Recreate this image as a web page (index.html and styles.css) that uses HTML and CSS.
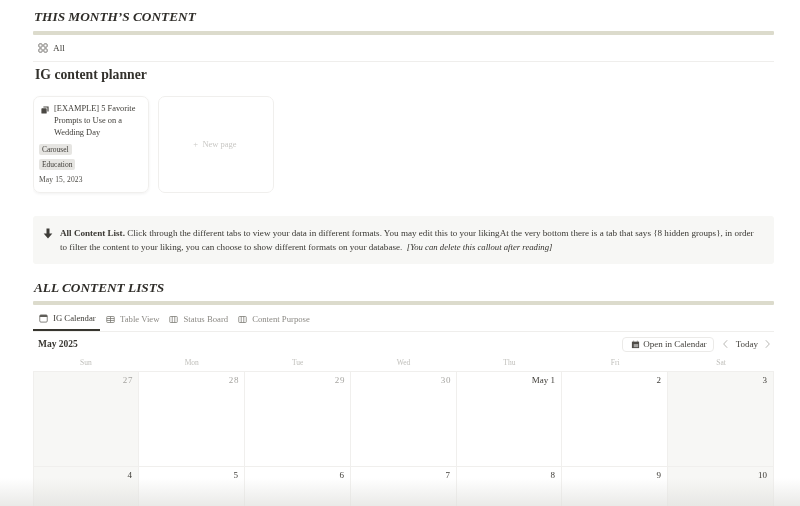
FILE: index.html
```html
<!DOCTYPE html>
<html lang="en">
<head>
<meta charset="utf-8">
<title>Content planner</title>
<link rel="stylesheet" href="styles.css">
</head>
<body>
<main class="page">
  <h2 class="section-title first">THIS MONTH’S CONTENT</h2>
  <div class="rule"></div>
  <nav class="tabs small-tabs">
    <span class="tab plain">
      <svg class="ico" viewBox="0 0 12 12"><rect x="1" y="1" width="4" height="4" rx="1"/><rect x="7" y="1" width="4" height="4" rx="1"/><rect x="1" y="7" width="4" height="4" rx="1"/><rect x="7" y="7" width="4" height="4" rx="1"/></svg>All
    </span>
  </nav>
  <h3 class="planner">IG content planner</h3>
  <div class="cards">
    <article class="card">
      <div class="card-head">
        <svg class="stack" viewBox="0 0 10 10"><path d="M3 0.500h6.500v6.500H8V2H3z"/><rect x="0.500" y="2.800" width="6.600" height="6.600" rx="0.800"/></svg>
        <span class="card-title">[EXAMPLE] 5 Favorite Prompts to Use on a Wedding Day</span>
      </div>
      <span class="tag">Carousel</span>
      <span class="tag">Education</span>
      <span class="date">May 15, 2023</span>
    </article>
    <article class="card new"><span>+&nbsp;&nbsp;New page</span></article>
  </div>
  <aside class="callout">
    <svg class="arrow" viewBox="0 0 12 13"><path d="M4.200 0.500h3.600v6h3.400L6 12.500 0.800 6.500h3.400z"/></svg>
    <p><b>All Content List.</b> Click through the different tabs to view your data in different formats. You may edit this to your likingAt the very bottom there is a tab that says {8 hidden groups}, in order to filter the content to your liking, you can choose to show different formats on your database.&nbsp; <i class="note">[You can delete this callout after reading]</i></p>
  </aside>
  <h2 class="section-title second">ALL CONTENT LISTS</h2>
  <div class="rule"></div>
  <nav class="tabs view-tabs">
    <span class="tab active">
      <svg class="ico" viewBox="0 0 12 12"><rect x="1" y="1.200" width="10" height="9.600" rx="1.500"/><path class="fill" d="M1 2.500a1.300 1.300 0 0 1 1.300-1.300h7.400A1.300 1.300 0 0 1 11 2.500V4H1z"/></svg>IG Calendar
    </span>
    <span class="tab">
      <svg class="ico" viewBox="0 0 12 12"><rect x="1" y="2" width="10" height="8" rx="1"/><path d="M1 4.700h10M1 7.300h10M6 2v8"/></svg>Table View
    </span>
    <span class="tab">
      <svg class="ico" viewBox="0 0 12 12"><rect x="1" y="2" width="10" height="8" rx="1"/><path d="M4.300 2v8M7.700 2v8"/></svg>Status Board
    </span>
    <span class="tab">
      <svg class="ico" viewBox="0 0 12 12"><rect x="1" y="2" width="10" height="8" rx="1"/><path d="M4.300 2v8M7.700 2v8"/></svg>Content Purpose
    </span>
  </nav>
  <div class="cal-bar">
    <strong>May 2025</strong>
    <div class="cal-actions">
      <span class="open-btn">
        <svg class="cal-ico" viewBox="0 0 10 10"><path d="M1 1.800h8V9H1z"/><path d="M2.500 0.800h1v1h-1zM6.500 0.800h1v1h-1z"/><path class="cut" d="M3 4.500h5v3.500H3z"/></svg>Open in Calendar
      </span>
      <svg class="chev" viewBox="0 0 8 12"><path d="M6 1.500 1.800 6 6 10.500"/></svg>
      <span class="today">Today</span>
      <svg class="chev" viewBox="0 0 8 12"><path d="M2 1.500 6.200 6 2 10.500"/></svg>
    </div>
  </div>
  <div class="weekdays">
    <span>Sun</span><span>Mon</span><span>Tue</span><span>Wed</span><span>Thu</span><span>Fri</span><span>Sat</span>
  </div>
  <div class="grid">
    <div class="cell off muted">27</div><div class="cell muted">28</div><div class="cell muted">29</div><div class="cell muted">30</div><div class="cell">May 1</div><div class="cell">2</div><div class="cell off">3</div>
    <div class="cell off">4</div><div class="cell">5</div><div class="cell">6</div><div class="cell">7</div><div class="cell">8</div><div class="cell">9</div><div class="cell off">10</div>
  </div>
</main>
<div class="fade"></div>
</body>
</html>
```
FILE: styles.css
```css
* { box-sizing: border-box; }
html, body { margin: 0; height: 100%; overflow: hidden; background: #fff; }
body { font-family: "Liberation Serif", serif; color: #37352f; }
.page { width: 741px; height: 506px; margin-left: 33px; overflow: hidden; filter: blur(0.35px); }
.section-title { margin: 0; font-size: 13.300px; line-height: 18px; font-style: italic; font-weight: 700; color: #2f2d29; padding-left: 1px; }
.first { padding-top: 8px; height: 31px; }
.second { margin-top: 14px; height: 23px; padding-top: 1px; }
.rule { height: 4px; background: #dcdbcc; border-radius: 1px; }
.tabs { display: flex; border-bottom: 1px solid #efeeec; font-size: 9.200px; }
.small-tabs { height: 27px; padding-left: 5px; align-items: center; }
.tab { display: flex; align-items: center; gap: 5px; color: #6b6963; }
.plain { color: #3f3d38; }
.ico { width: 10px; height: 10px; fill: none; stroke: #5f5d58; stroke-width: 1; }
.fill { fill: #5f5d58; stroke: none; }
.planner { margin: 4px 0 0 2px; height: 30px; font-size: 13.700px; line-height: 18px; color: #33312c; font-weight: 700; }
.cards { display: flex; gap: 9px; height: 97px; }
.card { width: 116px; height: 97px; border: 1px solid #f0efed; border-radius: 7px; box-shadow: 0 1px 3px rgba(15, 15, 15, .06); padding: 6px 5px 0; font-size: 8px; display: flex; flex-direction: column; align-items: flex-start; }
.card-head { display: flex; gap: 5px; padding-left: 2px; font-size: 8.400px; line-height: 12px; color: #3f3d38; }
.card-title { width: 84px; }
.stack { width: 8px; height: 8px; flex: none; margin-top: 3px; fill: #4a4843; }
.tag { margin-top: 4px; padding: 0 3px; height: 11px; line-height: 11px; background: #e6e5e2; border-radius: 2px; font-size: 7.500px; color: #3f3d38; }
.card-head + .tag { margin-top: 5px; }
.date { margin-top: 5px; font-size: 7.500px; line-height: 10px; color: #4d4b46; letter-spacing: .15px; }
.new { align-items: center; justify-content: center; padding: 0 2px 2px 0; box-shadow: none; color: #c9c8c5; font-size: 8.500px; }
.callout { margin-top: 23px; height: 48px; background: #f7f7f5; border-radius: 3px; display: flex; padding: 11px 14px 0 10px; gap: 7px; }
.arrow { width: 10px; height: 11px; flex: none; margin-top: 1px; fill: #3e3c38; }
.callout p { margin: 0; font-size: 9.100px; line-height: 13.800px; color: #3a3833; }
.note { color: #33312c; font-size: 8.700px; }
.view-tabs { height: 27px; gap: 10px; }
.view-tabs .tab { height: 26px; padding-top: 2px; font-size: 8.700px; color: #8d8b86; gap: 5px; }
.view-tabs .tab .ico { width: 9px; height: 9px; stroke: #77756f; }
.view-tabs .active { width: 67px; color: #3f3d38; padding-left: 6px; border-bottom: 2px solid #37352f; margin-right: -4px; white-space: nowrap; }
.view-tabs .active .ico { stroke: #5f5d58; }
.cal-bar { display: flex; justify-content: space-between; align-items: center; height: 24px; padding: 0 3px 0 5px; font-size: 9.500px; }
.cal-bar strong { color: #3a3833; font-size: 9.500px; }
.cal-actions { display: flex; align-items: center; color: #45433e; font-size: 9px; }
.open-btn { display: flex; align-items: center; gap: 3px; height: 15px; padding: 0 6px 0 8px; border: 1px solid #ebeae8; border-radius: 4px; margin-right: 8px; }
.cal-ico { width: 9px; height: 9px; fill: #4d4b46; }
.cut { fill: #fff; opacity: .5; }
.chev { width: 7px; height: 10px; fill: none; stroke: #a9a8a4; stroke-width: 1; }
.today { margin: 0 6px 0 7px; }
.weekdays { display: grid; grid-template-columns: repeat(7, 1fr); height: 15px; padding-top: 2px; text-align: center; font-size: 7.500px; color: #c1c0bc; }
.grid { display: grid; grid-template-columns: 106px 106px 106px 106px 105px 106px 106px; grid-auto-rows: 95px; border-top: 1px solid #f0efed; }
.cell { border-right: 1px solid #f0efed; border-bottom: 1px solid #f0efed; text-align: right; padding: 2px 6px 0 0; font-size: 9px; line-height: 12px; color: #3f3d38; }
.cell:nth-child(7n+1) { border-left: 1px solid #f0efed; }
.off { background: #f7f7f5; }
.muted { color: #a6a5a1; letter-spacing: .6px; padding-right: 5px; }
.fade { position: absolute; left: 0; right: 0; bottom: 0; height: 28px; background: linear-gradient(to bottom, rgba(225, 225, 222, 0), rgba(225, 225, 222, .7)); pointer-events: none; }
```
